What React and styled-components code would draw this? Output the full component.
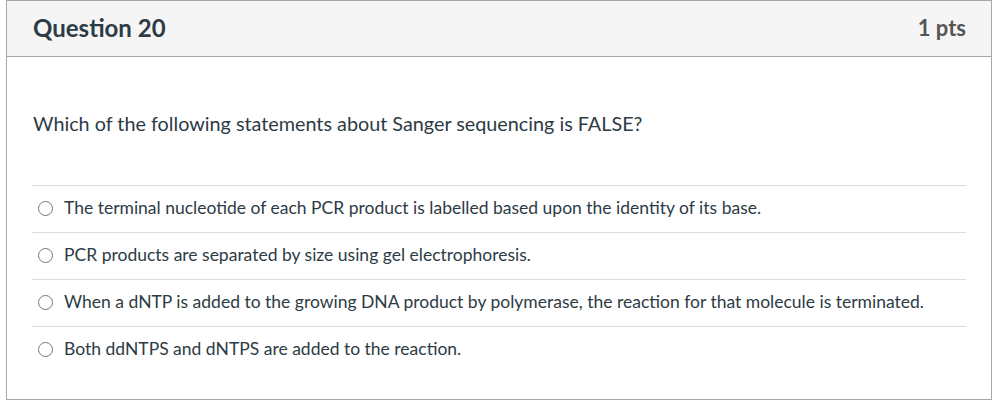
import React from 'react'
import styled, { createGlobalStyle } from 'styled-components'

const GlobalStyle = createGlobalStyle`
  body {
    margin: 0;
    background: #fff;
    font-family: Lato, "Noto Sans", sans-serif;
    color: #2d3b45;
  }
`

const Card = styled.div`
  box-sizing: border-box;
  margin-left: 6px;
  width: 986px;
  height: 400px;
  border: 1px solid #a8a8a8;
  display: flex;
  flex-direction: column;
`

const Header = styled.div`
  box-sizing: border-box;
  height: 56px;
  background: #f5f5f5;
  border-bottom: 1px solid #a8a8a8;
  display: flex;
  align-items: center;
  justify-content: space-between;
  padding: 0 25px 2px 26px;
`

const Title = styled.h2`
  margin: 0;
  font-size: 24px;
  font-weight: 700;
  color: #2d3b45;
`

const Points = styled.span`
  font-size: 22px;
  font-weight: 700;
  color: #555;
`

const Body = styled.div`
  padding: 54px 25px 0 25px;
`

const Prompt = styled.p`
  margin: 0 0 50px 1px;
  font-size: 19.8px;
  line-height: 24px;
`

const Answers = styled.div`
  display: flex;
  flex-direction: column;
`

const Answer = styled.label`
  box-sizing: border-box;
  height: 47px;
  display: flex;
  align-items: center;
  gap: 11px;
  padding: 0 0 3px 6px;
  border-top: 1px solid #dcdcdc;
  font-size: 17.5px;
`

const Radio = styled.span`
  box-sizing: border-box;
  width: 15px;
  height: 15px;
  border-radius: 50%;
  border: 1px solid #777;
  flex-shrink: 0;
  margin-top: 2px;
`

const answers = [
  'The terminal nucleotide of each PCR product is labelled based upon the identity of its base.',
  'PCR products are separated by size using gel electrophoresis.',
  'When a dNTP is added to the growing DNA product by polymerase, the reaction for that molecule is terminated.',
  'Both ddNTPS and dNTPS are added to the reaction.',
]

const App = () => {
  return (
    <>
      <GlobalStyle />
      <Card>
        <Header>
          <Title>Question 20</Title>
          <Points>1 pts</Points>
        </Header>
        <Body>
          <Prompt>Which of the following statements about Sanger sequencing is FALSE?</Prompt>
          <Answers>
            {answers.map((a) => (
              <Answer key={a}>
                <Radio />
                {a}
              </Answer>
            ))}
          </Answers>
        </Body>
      </Card>
    </>
  )
}

export default App
